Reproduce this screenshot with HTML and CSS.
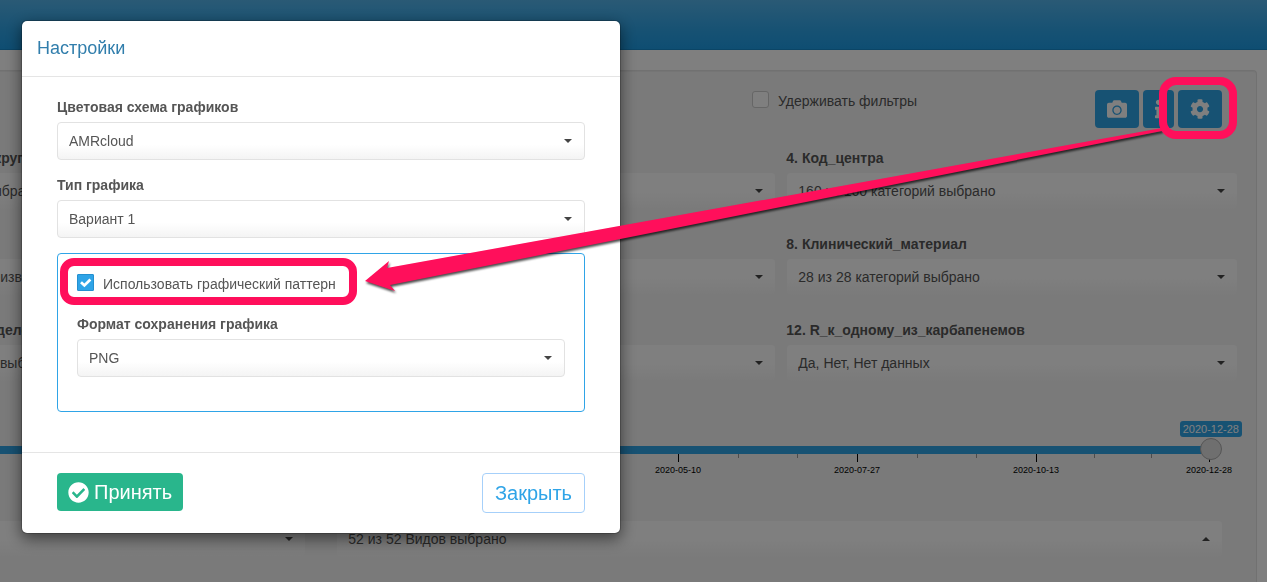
FILE: index.html
```html
<!DOCTYPE html>
<html lang="ru">
  <head>
    <meta charset="UTF-8" />
    <meta name="viewport" content="width=device-width, initial-scale=1.0" />
    <title>AMRcloud - Настройки</title>
    <link rel="stylesheet" href="styles.css">
  </head>
  <body>
    <div class="navbar"></div>
    <div class="well">
      <div class="toolbar">
        <div class="toolbar-right">
          <label class="check"><input type="checkbox" /><span>Удерживать фильтры</span></label>
          <div class="buttons">
            <button class="btn btn-primary" type="button" aria-label="Снимок">
              <svg width="20" height="20" viewBox="0 0 512 512"><path d="M512 144v288c0 26.5-21.5 48-48 48H48c-26.5 0-48-21.5-48-48V144c0-26.5 21.5-48 48-48h88l12.3-32.9c7-18.7 24.9-31.1 44.9-31.1h125.5c20 0 37.9 12.4 44.9 31.1L376 96h88c26.5 0 48 21.5 48 48zM376 288c0-66.2-53.8-120-120-120s-120 53.8-120 120 53.8 120 120 120 120-53.8 120-120zm-32 0c0 48.5-39.5 88-88 88s-88-39.5-88-88 39.5-88 88-88 88 39.5 88 88z"/></svg>
            </button>
            <button class="btn btn-primary" type="button" aria-label="Информация">
              <svg width="7" height="20" viewBox="0 0 192 512"><path d="M20 424.229h20V279.771H20c-11.046 0-20-8.954-20-20V212c0-11.046 8.954-20 20-20h112c11.046 0 20 8.954 20 20v212.229h20c11.046 0 20 8.954 20 20V492c0 11.046-8.954 20-20 20H20c-11.046 0-20-8.954-20-20v-47.771c0-11.046 8.954-20 20-20zM96 0C56.235 0 24 32.235 24 72s32.235 72 72 72 72-32.235 72-72S135.764 0 96 0z"/></svg>
            </button>
            <button class="btn btn-primary" type="button" aria-label="Настройки">
              <svg width="20" height="20" viewBox="0 0 512 512"><path d="M487.4 315.7l-42.6-24.6c4.3-23.2 4.3-47 0-70.2l42.6-24.6c4.9-2.8 7.1-8.6 5.5-14-11.1-35.6-30-67.8-54.7-94.6-3.8-4.1-10-5.1-14.8-2.3L380.8 110c-17.9-15.4-38.5-27.3-60.8-35.1V25.8c0-5.6-3.9-10.5-9.4-11.7-36.7-8.2-74.3-7.8-109.2 0-5.5 1.2-9.4 6.1-9.4 11.7V75c-22.2 7.9-42.8 19.8-60.8 35.1L88.7 85.5c-4.9-2.8-11-1.9-14.8 2.3-24.7 26.7-43.6 58.9-54.7 94.6-1.7 5.4.6 11.2 5.5 14L67.3 221c-4.3 23.2-4.3 47 0 70.2l-42.6 24.6c-4.9 2.8-7.1 8.6-5.5 14 11.1 35.6 30 67.8 54.7 94.6 3.8 4.1 10 5.1 14.8 2.3l42.6-24.6c17.9 15.4 38.5 27.3 60.8 35.1v49.2c0 5.6 3.9 10.5 9.4 11.7 36.7 8.2 74.3 7.8 109.2 0 5.5-1.2 9.4-6.1 9.4-11.7v-49.2c22.2-7.9 42.8-19.8 60.8-35.1l42.6 24.6c4.9 2.8 11 1.9 14.8-2.3 24.7-26.7 43.6-58.9 54.7-94.6 1.5-5.5-.7-11.3-5.6-14.1zM256 336c-44.1 0-80-35.9-80-80s35.9-80 80-80 80 35.9 80 80-35.9 80-80 80z"/></svg>
            </button>
          </div>
        </div>
      </div>

      <div class="filters">
        <div class="field">
          <label for="f2">2. Федеральный_округ</label>
          <div class="select"><select id="f2"><option>8 из 8 категорий выбрано</option></select></div>
        </div>
        <div class="field">
          <label for="f3">3. Город</label>
          <div class="select"><select id="f3"><option>52 из 52 категорий выбрано</option></select></div>
        </div>
        <div class="field">
          <label for="f4">4. Код_центра</label>
          <div class="select"><select id="f4"><option>160 из 160 категорий выбрано</option></select></div>
        </div>
        <div class="field">
          <label for="f6">6. Возраст</label>
          <div class="select"><select id="f6"><option>Да, Нет, Другое, Неизвестно</option></select></div>
        </div>
        <div class="field">
          <label for="f7">7. Диагноз</label>
          <div class="select"><select id="f7"><option>24 из 24 категорий выбрано</option></select></div>
        </div>
        <div class="field">
          <label for="f8">8. Клинический_материал</label>
          <div class="select"><select id="f8"><option>28 из 28 категорий выбрано</option></select></div>
        </div>
        <div class="field">
          <label for="f10">10. Категория_в_отделении</label>
          <div class="select"><select id="f10"><option>12 из 12 категорий выбрано</option></select></div>
        </div>
        <div class="field">
          <label for="f11">11. Карбапенемаза</label>
          <div class="select"><select id="f11"><option>7 из 7 категорий выбрано</option></select></div>
        </div>
        <div class="field">
          <label for="f12">12. R_к_одному_из_карбапенемов</label>
          <div class="select"><select id="f12"><option>Да, Нет, Нет данных</option></select></div>
        </div>
      </div>

      <div class="slider">
        <output class="slider-value" for="date">2020-12-28</output>
        <input id="date" type="range" min="0" max="100" value="100" aria-label="Дата" />
        <div class="ticks">
          <span class="tick major"><span>2020-05-10</span></span>
          <span class="tick"></span>
          <span class="tick"></span>
          <span class="tick major"><span>2020-07-27</span></span>
          <span class="tick"></span>
          <span class="tick"></span>
          <span class="tick major"><span>2020-10-13</span></span>
          <span class="tick"></span>
          <span class="tick"></span>
          <span class="tick major"><span>2020-12-28</span></span>
        </div>
      </div>

      <div class="species">
        <div class="select"><select aria-label="Группа"><option>Все</option></select></div>
        <div class="select dropup"><select aria-label="Виды"><option>52 из 52 Видов выбрано</option></select></div>
      </div>
    </div>

    <div class="backdrop">
      <div class="modal" role="dialog" aria-labelledby="modal-title">
        <div class="modal-header">
          <h4 id="modal-title">Настройки</h4>
        </div>
        <div class="modal-body">
          <div class="field">
            <label for="scheme">Цветовая схема графиков</label>
            <div class="select"><select id="scheme"><option>AMRcloud</option></select></div>
          </div>
          <div class="field">
            <label for="type">Тип графика</label>
            <div class="select"><select id="type"><option>Вариант 1</option></select></div>
          </div>
          <div class="panel">
            <label class="check"><input type="checkbox" checked /><span>Использовать графический паттерн</span></label>
            <div class="field">
              <label for="format">Формат сохранения графика</label>
              <div class="select"><select id="format"><option>PNG</option></select></div>
            </div>
          </div>
        </div>
        <div class="modal-footer">
          <button class="btn btn-success" type="button">
            <svg width="21" height="21" viewBox="0 0 512 512"><path d="M504 256c0 136.967-111.033 248-248 248S8 392.967 8 256 119.033 8 256 8s248 111.033 248 248zM227.314 387.314l184-184c6.248-6.248 6.248-16.379 0-22.627l-22.627-22.627c-6.248-6.249-16.379-6.249-22.628 0L216 308.118l-70.059-70.059c-6.248-6.248-16.379-6.248-22.628 0l-22.627 22.627c-6.248 6.248-6.248 16.379 0 22.627l104 104c6.249 6.249 16.379 6.249 22.628.001z"/></svg>
            Принять
          </button>
          <button class="btn btn-close" type="button">Закрыть</button>
        </div>
      </div>
    </div>

    <!-- Выделение и стрелка поверх страницы -->
    <svg class="marks" width="1267" height="582" viewBox="0 0 1267 582">
      <polygon class="arrow" points="365,281 389,261 387,268 1162,128 1162,131 390,285 395,291" />
      <rect x="64" y="262" width="289" height="39" rx="10" />
      <rect x="1163" y="81" width="70" height="54" rx="13" />
    </svg>
  </body>
</html>
```
FILE: styles.css
```css
* {
  box-sizing: border-box;
}
body {
  margin: 0;
  height: 100vh;
  overflow: hidden;
  background: #fff;
  color: #555;
  font-family: "Liberation Sans", Arial, sans-serif;
  font-size: 14px;
  line-height: 20px;
}
label {
  display: block;
}

.navbar {
  height: 50px;
  background: linear-gradient(#54b4eb, #2fa4e7 60%, #1d9ce5);
  border-bottom: 1px solid #178acc;
}

.well {
  margin: 20px 10px 0 -156px;
  padding: 19px 18px 24px;
  background: #f5f5f5;
  border: 1px solid #e3e3e3;
  border-bottom: 0;
  border-radius: 4px 4px 0 0;
  box-shadow: inset 0 1px 1px rgba(0, 0, 0, 0.05);
}

.toolbar {
  display: flex;
  justify-content: flex-end;
  padding-right: 16px;
  margin-bottom: 20px;
}
.toolbar-right {
  display: flex;
  justify-content: space-between;
  width: 470px;
}
.buttons {
  display: flex;
  gap: 4px;
}

/* Кнопки */
.btn {
  height: 38px;
  padding: 0 11px;
  border: 1px solid transparent;
  border-radius: 4px;
  font-family: inherit;
  font-size: 20px;
  cursor: pointer;
}
.btn svg {
  display: block;
  fill: currentColor;
}
.btn-primary {
  background: #2fa4e7;
  color: #fff;
}
.btn-success {
  display: flex;
  align-items: center;
  gap: 5px;
  padding: 0 10px;
  background: #29b68c;
  color: #fff;
}
.btn-close {
  height: 40px;
  padding: 0 12px;
  background: #fff;
  border-color: #a6d0fa;
  color: #2fa4e7;
}

/* Флажки */
.check {
  display: flex;
  align-items: flex-start;
  gap: 9px;
}
.check span {
  padding-top: 1px;
}
.check input {
  appearance: none;
  flex: none;
  width: 17px;
  height: 17px;
  margin: 1px 0 0;
  background: #fff;
  border: 1px solid #ccc;
  border-radius: 3px;
}
.check input:checked {
  border-color: #2490d0;
  border-radius: 1px;
  background: #2fa4e7 url("data:image/svg+xml,%3Csvg xmlns='http://www.w3.org/2000/svg' viewBox='0 0 15 15'%3E%3Cpath d='M3 7.2l3.4 3.2L12.4 4.6' fill='none' stroke='white' stroke-width='2.8'/%3E%3C/svg%3E");
}

/* Списки */
.field label {
  margin-bottom: 5px;
  font-weight: bold;
}
.select {
  position: relative;
}
.select select {
  appearance: none;
  display: block;
  width: 100%;
  height: 38px;
  padding: 0 30px 0 11px;
  border: 1px solid #e2e2e2;
  border-radius: 4px;
  background: linear-gradient(#fff 60%, #f4f4f4);
  color: #555;
  font-family: inherit;
  font-size: 14px;
}
.select::after {
  content: "";
  position: absolute;
  top: 17px;
  right: 13px;
  border-top: 4px solid #444;
  border-left: 4px solid transparent;
  border-right: 4px solid transparent;
}
.dropup::after {
  border-top: 0;
  border-bottom: 4px solid #444;
}
.well .select select {
  border-color: #f5f5f5;
  background: linear-gradient(#fff 50%, #f5f5f5);
}

.filters {
  display: grid;
  grid-template-columns: repeat(3, 1fr);
  gap: 24px 10px;
}
.filters .field label {
  margin-bottom: 4px;
}

/* Шкала дат */
.slider {
  display: flex;
  flex-direction: column;
  margin-top: 39px;
  padding-right: 16px;
}
.slider-value {
  align-self: flex-end;
  margin-right: -20px;
  padding: 0 3px;
  border-radius: 3px;
  background: #2fa4e7;
  color: #fff;
  font-size: 11px;
  line-height: 16px;
}
.slider input {
  position: relative;
  z-index: 1;
  appearance: none;
  width: 100%;
  height: 22px;
  margin: 1px 0 0;
  background: linear-gradient(#2fa4e7, #2fa4e7) 0 8px / calc(100% - 11px) 8px no-repeat;
}
.slider input::-webkit-slider-thumb {
  appearance: none;
  width: 22px;
  height: 22px;
  border: 1px solid #aaa;
  border-radius: 50%;
  background: #dedede;
}
.ticks {
  display: grid;
  grid-template-columns: repeat(6, 60fr) repeat(3, 58fr) 1px;
  align-self: flex-end;
  width: 532px;
  height: 26px;
  margin: -6px 12px 0 0;
}
.tick::before {
  content: "";
  display: block;
  width: 1px;
  height: 4px;
  background: #999;
}
.tick.major::before {
  height: 8px;
  background: #000;
}
.tick span {
  display: block;
  width: 50px;
  margin-left: -25px;
  color: #000;
  font-size: 9px;
  line-height: 16px;
  text-align: center;
}

.species {
  display: grid;
  grid-template-columns: 1fr 2fr;
  margin-top: 40px;
}
.species .select {
  margin: 0 15px;
}

/* Модальное окно */
.backdrop {
  position: fixed;
  inset: 0;
  z-index: 2;
  padding: 20px 21px;
  background: rgba(0, 0, 0, 0.5);
}
.modal {
  max-width: 600px;
  background: #fff;
  background-clip: padding-box;
  border: 1px solid rgba(0, 0, 0, 0.2);
  border-radius: 6px;
  box-shadow: 0 5px 15px rgba(0, 0, 0, 0.5);
}
.modal-header {
  padding: 15px;
  border-bottom: 1px solid #e5e5e5;
}
.modal-header h4 {
  margin: 0;
  color: #317eac;
  font-size: 18px;
  font-weight: normal;
  line-height: 25px;
}
.modal-body {
  padding: 20px 35px 40px;
}
.modal-body .field {
  margin-bottom: 15px;
}
.panel {
  padding: 19px;
  border: 1px solid #2fa4e7;
  border-radius: 4px;
}
.panel .check {
  margin-bottom: 20px;
}
.modal-footer {
  display: flex;
  justify-content: space-between;
  align-items: flex-start;
  padding: 20px 35px;
  border-top: 1px solid #e5e5e5;
}

.marks {
  position: absolute;
  top: 0;
  left: 0;
  z-index: 3;
  pointer-events: none;
}
.marks rect {
  fill: none;
  stroke: #ff0f5b;
  stroke-width: 8;
}
.arrow {
  fill: #ff0f5b;
  filter: drop-shadow(1px 2px 1px rgba(0, 0, 0, 0.7));
}
```
